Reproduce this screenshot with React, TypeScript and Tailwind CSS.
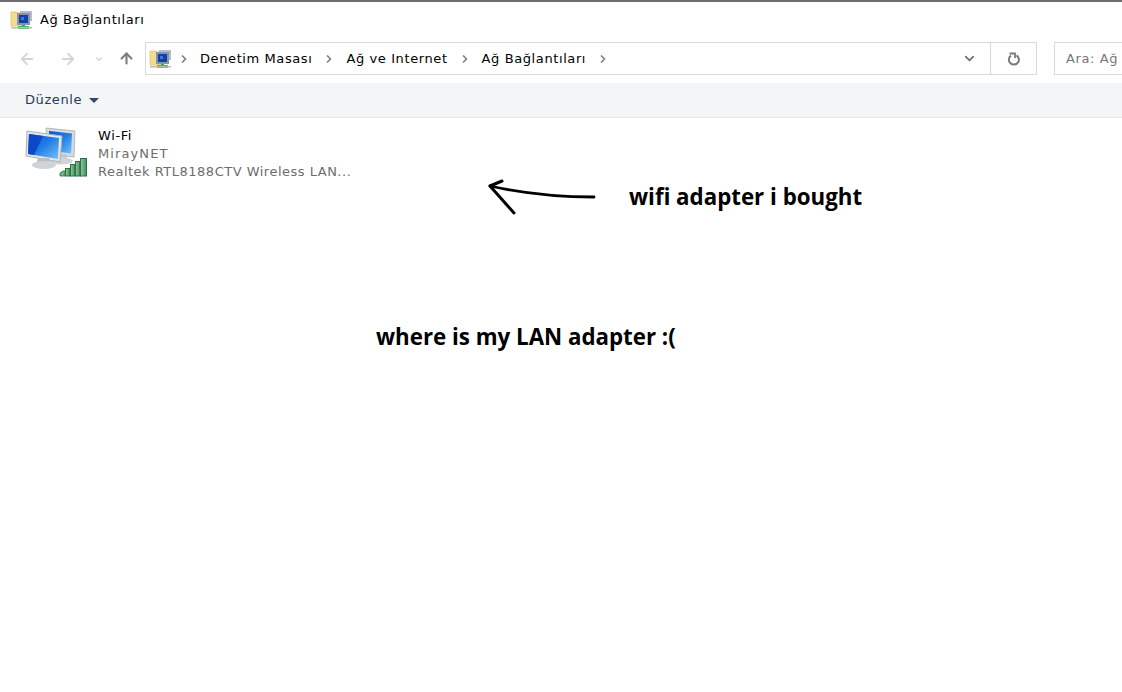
import { ArrowLeft, ArrowRight, ArrowUp, ChevronDown } from "lucide-react";

function NetworkFolderIcon() {
  return (
    <svg width="24" height="20" viewBox="0 0 24 20" className="shrink-0">
      <path d="M1 2h6l1 1h5v13H1z" fill="#f3dc8c" stroke="#dcc579" strokeWidth="0.8" />
      <rect x="10" y="1" width="12" height="10" fill="#b5bdca" />
      <rect x="7" y="3" width="13" height="12" fill="#8494ae" />
      <rect x="9" y="5" width="9" height="8" fill="#123fa8" />
      <rect x="11" y="7" width="3" height="3" fill="#3f78d8" />
      <rect x="12" y="15" width="3" height="2" fill="#2fa84f" />
      <rect x="8" y="16" width="11" height="3" fill="#3ebd63" />
      <rect x="1" y="17" width="21" height="1.5" fill="#b9bcb2" />
    </svg>
  );
}

function ComputersIcon() {
  return (
    <svg width="66" height="50" viewBox="0 0 66 50" className="shrink-0">
      <defs>
        <linearGradient id="screen" x1="0" y1="0" x2="1" y2="1">
          <stop offset="0" stopColor="#0a4fd0" />
          <stop offset="0.5" stopColor="#1f7fe6" />
          <stop offset="1" stopColor="#7cc0f5" />
        </linearGradient>
        <linearGradient id="bar" x1="0" y1="0" x2="1" y2="0">
          <stop offset="0" stopColor="#8fcaa0" />
          <stop offset="1" stopColor="#3f8f5c" />
        </linearGradient>
      </defs>
      <path d="M22 1l29 3-1 26-26-3z" fill="#d5dade" stroke="#b3bac0" />
      <path d="M25 4l23 2.500-1 20-22-3z" fill="url(#screen)" />
      <path d="M30 27h12l2 6H28z" fill="#c3c7ca" />
      <ellipse cx="37" cy="34" rx="12" ry="3.500" fill="#d2d5d7" />
      <path d="M3 4l35 5-2 26-34-6z" fill="#e4e7ea" stroke="#aab2b9" />
      <path d="M5 7l30 4-1 21-30-5z" fill="url(#screen)" />
      <path d="M5 7l14 2-9 19-6-1z" fill="#0c49c8" />
      <path d="M14 31h11l1 4H13z" fill="#b9bec2" />
      <ellipse cx="20" cy="38" rx="12" ry="4" fill="#cfd3d5" />
      <path d="M36 49v-3l3-2h2v5z" fill="#6fb185" stroke="#2d6e45" strokeWidth="0.8" />
      <rect x="41.500" y="41.500" width="4.500" height="7.500" fill="url(#bar)" stroke="#2d6e45" />
      <rect x="46.500" y="37.500" width="4.500" height="11.500" fill="url(#bar)" stroke="#2d6e45" />
      <rect x="51.500" y="34.500" width="4.500" height="14.500" fill="url(#bar)" stroke="#2d6e45" />
      <rect x="56.500" y="31.500" width="6" height="17.500" fill="url(#bar)" stroke="#2d6e45" />
    </svg>
  );
}

function RefreshIcon() {
  return (
    <svg width="16" height="16" viewBox="0 0 16 16" fill="none" stroke="#7a7a7a" strokeWidth="2">
      <path d="M10.500 4.300A5 5 0 1 1 5 4.500" />
      <path d="M3.500 2.500H9V7" strokeWidth="1.800" />
    </svg>
  );
}

function Chevron() {
  return (
    <svg width="6" height="8" viewBox="0 0 6 8" fill="none" stroke="#808080" strokeWidth="1.600" className="shrink-0">
      <path d="M1 0.500L4.500 4L1 7.500" />
    </svg>
  );
}

function Crumb({ label }: { label: string }) {
  return (
    <>
      <span className="whitespace-nowrap">{label}</span>
      <Chevron />
    </>
  );
}

export default function App() {
  return (
    <div className="relative h-[692px] w-[1122px] overflow-hidden bg-white font-['DejaVu_Sans',sans-serif] text-[13px] tracking-[0.6px] text-black">
      <div className="h-[2px] bg-[#6e6e6e]" />

      <div className="flex h-[40px] items-center gap-[6px] pl-[10px] pb-[4px]">
        <NetworkFolderIcon />
        <span>Ağ Bağlantıları</span>
      </div>

      <div className="flex h-[33px] items-center">
        <div className="flex w-[145px] items-center pl-[18px] text-[#d6d6d6]">
          <ArrowLeft size={18} strokeWidth={2.4} />
          <ArrowRight size={18} strokeWidth={2.4} className="ml-[23px]" />
          <ChevronDown size={10} strokeWidth={3} className="ml-[17px]" />
          <ArrowUp size={17} strokeWidth={3} className="ml-[14px] text-[#7d7d7d]" />
        </div>
        <div className="flex h-[33px] w-[846px] items-center border border-[#d9d9d9] pl-[3px]">
          <NetworkFolderIcon />
          <div className="ml-[8px] flex items-center gap-[14px]">
            <Chevron />
            <span className="-ml-[1px] flex items-center gap-[14px]">
              <Crumb label="Denetim Masası" />
              <Crumb label="Ağ ve Internet" />
              <Crumb label="Ağ Bağlantıları" />
            </span>
          </div>
          <ChevronDown size={15} strokeWidth={2.8} className="ml-auto mr-[13px] text-[#707070]" />
        </div>
        <div className="flex h-[33px] w-[46px] items-center justify-center border border-l-0 border-[#d9d9d9]">
          <RefreshIcon />
        </div>
        <div className="ml-[17px] flex h-[33px] flex-1 items-center border border-r-0 border-[#d9d9d9] pl-[11px] text-[#777777]">
          <span className="whitespace-nowrap">Ara: Ağ</span>
        </div>
      </div>

      <div className="mt-[8px] flex h-[35px] items-center gap-[7px] border-b border-[#e8e8e8] bg-[#f4f5f7] pl-[25px] text-[#1e3a5f]">
        <span>Düzenle</span>
        <span className="h-0 w-0 border-x-[5px] border-t-[5px] border-x-transparent border-t-[#33496b]" />
      </div>

      <div className="flex gap-[8px] pl-[24px] pt-[9px]">
        <ComputersIcon />
        <div className="flex flex-col leading-[18px] text-[#6d6d6d]">
          <span className="text-black">Wi-Fi</span>
          <span className="tracking-[1.1px]">MirayNET</span>
          <span className="whitespace-nowrap tracking-[0.5px]">Realtek RTL8188CTV Wireless LAN...</span>
        </div>
      </div>

      <svg width="110" height="40" viewBox="0 0 110 40" className="absolute left-[487px] top-[178px]" fill="none" stroke="black" strokeLinecap="round">
        <path d="M3 8C30 14 60 19 107 19" strokeWidth="2.800" />
        <path d="M15 3L3 8L27 35" strokeWidth="3" strokeLinejoin="round" />
      </svg>
      <span className="absolute left-[629px] top-[180px] whitespace-nowrap font-['Open_Sans',sans-serif] text-[22.3px] font-bold tracking-normal">wifi adapter i bought</span>
      <span className="absolute left-[376px] top-[320px] whitespace-nowrap font-['Open_Sans',sans-serif] text-[22.3px] font-bold tracking-normal">where is my LAN adapter :(</span>
    </div>
  );
}
